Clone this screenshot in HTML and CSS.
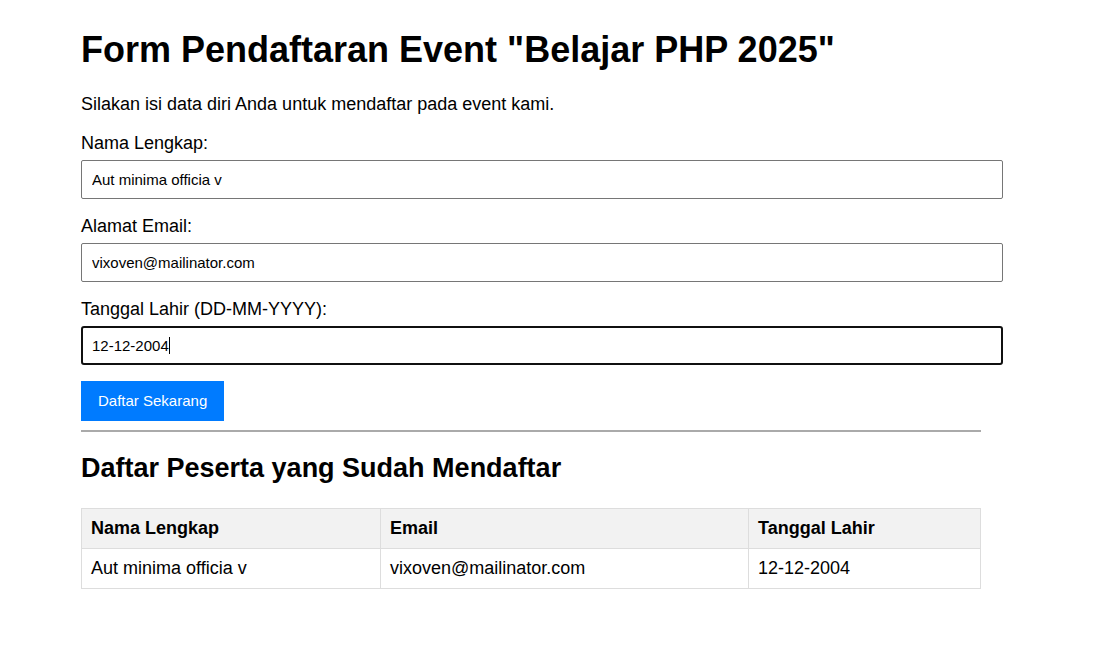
FILE: index.html
```html
<!DOCTYPE html>
<html lang="id">
<head>
<meta charset="utf-8">
<title>Form Pendaftaran Event</title>
<link rel="stylesheet" href="styles.css">
</head>
<body>
<div class="container">
  <h1>Form Pendaftaran Event "Belajar PHP 2025"</h1>
  <p class="intro">Silakan isi data diri Anda untuk mendaftar pada event kami.</p>
  <form class="form">
    <div class="field">
      <label for="nama">Nama Lengkap:</label>
      <input type="text" id="nama" value="Aut minima officia v">
    </div>
    <div class="field">
      <label for="email">Alamat Email:</label>
      <input type="text" id="email" value="vixoven@mailinator.com">
    </div>
    <div class="field">
      <label for="tgl">Tanggal Lahir (DD-MM-YYYY):</label>
      <div class="focus-wrap"><input type="text" id="tgl" class="is-focused" value="12-12-2004"><span class="caret"></span></div>
    </div>
    <button type="button" class="btn">Daftar Sekarang</button>
  </form>
  <hr class="divider">
  <h2>Daftar Peserta yang Sudah Mendaftar</h2>
  <table class="peserta">
    <colgroup>
      <col class="col-nama">
      <col class="col-email">
      <col class="col-tgl">
    </colgroup>
    <thead>
      <tr><th>Nama Lengkap</th><th>Email</th><th>Tanggal Lahir</th></tr>
    </thead>
    <tbody>
      <tr><td>Aut minima officia v</td><td>vixoven@mailinator.com</td><td>12-12-2004</td></tr>
    </tbody>
  </table>
</div>
</body>
</html>
```
FILE: styles.css
```css
body {
  margin: 0;
  font-family: "Liberation Sans", Arial, sans-serif;
  color: #000;
  background: #fff;
}
.container {
  width: 900px;
  margin-left: 81px;
  padding-top: 21px;
}
h1 {
  font-size: 36px;
  margin: 8px 0 0;
  line-height: 42px;
}
.intro {
  font-size: 18px;
  line-height: 21px;
  margin: 23px 0 18px;
}
.field {
  margin-bottom: 17px;
}
.field label {
  display: block;
  font-size: 18px;
  line-height: 21px;
  margin-bottom: 6px;
}
.field input {
  display: block;
  width: 100%;
  padding: 10px;
  font-family: "Liberation Sans", Arial, sans-serif;
  font-size: 15px;
  line-height: 17px;
  border: 1px solid #767676;
  border-radius: 2px;
  color: #000;
  box-sizing: content-box;
  margin: 0;
}
.focus-wrap {
  position: relative;
}
.field input.is-focused {
  border: 2px solid #101010;
  padding: 9px;
  border-radius: 3px;
  outline: none;
}
.caret {
  position: absolute;
  left: 88px;
  top: 11px;
  width: 1px;
  height: 17px;
  background: #000;
}
.form .field:last-of-type {
  margin-bottom: 16px;
}
.btn {
  display: block;
  background: #007bff;
  color: #fff;
  border: none;
  font-family: "Liberation Sans", Arial, sans-serif;
  font-size: 15px;
  padding: 11px 17px;
  line-height: 18px;
  margin: 0;
  cursor: pointer;
}
.divider {
  border: none;
  border-top: 2px solid #aaa;
  margin: 9px 0 0;
}
h2 {
  font-size: 27px;
  line-height: 31px;
  margin: 21px 0 24px;
}
.peserta {
  width: 899px;
  border-collapse: collapse;
  table-layout: fixed;
  font-size: 18px;
}
.col-nama { width: 299px; }
.col-email { width: 368px; }
.col-tgl { width: 232px; }
.peserta th,
.peserta td {
  border: 1px solid #ddd;
  padding: 9px 9px;
  text-align: left;
  line-height: 21px;
}
.peserta th {
  background: #f2f2f2;
  font-weight: bold;
}
```
